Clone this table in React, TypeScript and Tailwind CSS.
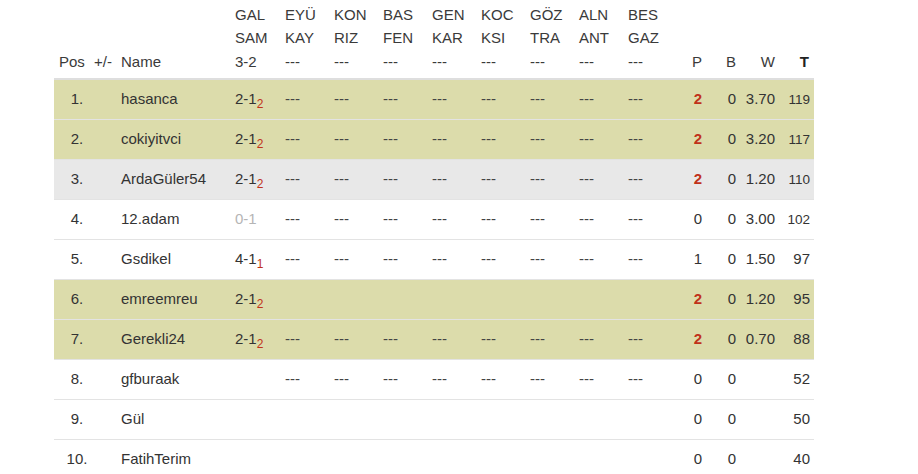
import React from "react";

type Row = {
  pos: string;
  name: string;
  gal: string;
  galSub?: string;
  galMuted?: boolean;
  dashes: boolean;
  p: string;
  pRed: boolean;
  b: string;
  w: string;
  t: string;
  bg: "olive" | "gray" | "white";
};

const rows: Row[] = [
  { pos: "1.", name: "hasanca", gal: "2-1", galSub: "2", dashes: true, p: "2", pRed: true, b: "0", w: "3.70", t: "119", bg: "olive" },
  { pos: "2.", name: "cokiyitvci", gal: "2-1", galSub: "2", dashes: true, p: "2", pRed: true, b: "0", w: "3.20", t: "117", bg: "olive" },
  { pos: "3.", name: "ArdaGüler54", gal: "2-1", galSub: "2", dashes: true, p: "2", pRed: true, b: "0", w: "1.20", t: "110", bg: "gray" },
  { pos: "4.", name: "12.adam", gal: "0-1", galMuted: true, dashes: true, p: "0", pRed: false, b: "0", w: "3.00", t: "102", bg: "white" },
  { pos: "5.", name: "Gsdikel", gal: "4-1", galSub: "1", dashes: true, p: "1", pRed: false, b: "0", w: "1.50", t: "97", bg: "white" },
  { pos: "6.", name: "emreemreu", gal: "2-1", galSub: "2", dashes: false, p: "2", pRed: true, b: "0", w: "1.20", t: "95", bg: "olive" },
  { pos: "7.", name: "Gerekli24", gal: "2-1", galSub: "2", dashes: true, p: "2", pRed: true, b: "0", w: "0.70", t: "88", bg: "olive" },
  { pos: "8.", name: "gfburaak", gal: "", dashes: true, p: "0", pRed: false, b: "0", w: "", t: "52", bg: "white" },
  { pos: "9.", name: "Gül", gal: "", dashes: false, p: "0", pRed: false, b: "0", w: "", t: "50", bg: "white" },
  { pos: "10.", name: "FatihTerim", gal: "", dashes: false, p: "0", pRed: false, b: "0", w: "", t: "40", bg: "white" },
];

const matches = [
  ["EYÜ", "KAY"],
  ["KON", "RIZ"],
  ["BAS", "FEN"],
  ["GEN", "KAR"],
  ["KOC", "KSI"],
  ["GÖZ", "TRA"],
  ["ALN", "ANT"],
  ["BES", "GAZ"],
];

const grid =
  "grid grid-cols-[35px_27px_114px_50px_49px_49px_49px_49px_49px_49px_49px_49px_35px_34px_39px_34px]";

export default function App() {
  return (
    <div
      className="w-[918px] h-[474px] overflow-hidden bg-white text-[#333] text-[15px]"
      style={{ fontFamily: '"Liberation Sans", Arial, sans-serif' }}
    >
      <div className="ml-[54px] w-[760px]">
        {/* header */}
        <div className={`${grid} h-[80px] items-end pb-[5px] border-b-2 border-[#dedede] leading-[23.5px] text-[#3a3a3a]`}>
          <div className="pl-[5px]">Pos</div>
          <div className="pl-[5px]">+/-</div>
          <div className="pl-[5px]">Name</div>
          <div className="pl-[5px] flex flex-col">
            <span>GAL</span>
            <span>SAM</span>
            <span>3-2</span>
          </div>
          {matches.map(([a, b]) => (
            <div key={a} className="pl-[5px] flex flex-col">
              <span>{a}</span>
              <span>{b}</span>
              <span>---</span>
            </div>
          ))}
          <div className="pr-[5px] text-right">P</div>
          <div className="pr-[5px] text-right">B</div>
          <div className="pr-[5px] text-right">W</div>
          <div className="pr-[5px] text-right font-bold text-[#222]">T</div>
        </div>
        {/* body */}
        {rows.map((r) => (
          <div
            key={r.pos}
            className={`${grid} h-[40px] items-center border-b border-[#e3e3e3] ${
              r.bg === "olive" ? "bg-[#dcdcab]" : r.bg === "gray" ? "bg-[#e8e8e8]" : "bg-white"
            }`}
          >
            <div className="col-span-2 pr-[16px] text-center">{r.pos}</div>
            <div className="pl-[5px]">{r.name}</div>
            <div className={`pl-[5px] ${r.galMuted ? "text-[#b5b5b5]" : ""}`}>
              {r.gal}
              {r.galSub && (
                <span className="text-[12px] text-[#c0321a] relative top-[4px] leading-none">{r.galSub}</span>
              )}
            </div>
            {matches.map(([a]) => (
              <div key={a} className="pl-[5px] text-[#444]">
                {r.dashes ? "---" : ""}
              </div>
            ))}
            <div className={`pr-[5px] text-right ${r.pRed ? "font-bold text-[#c0321a]" : ""}`}>{r.p}</div>
            <div className="pr-[5px] text-right">{r.b}</div>
            <div className="pr-[5px] text-right">{r.w}</div>
            <div className={`pr-[4px] text-right ${r.t.length > 2 ? "text-[13.5px] pt-[2px]" : ""}`}>{r.t}</div>
          </div>
        ))}
      </div>
    </div>
  );
}
